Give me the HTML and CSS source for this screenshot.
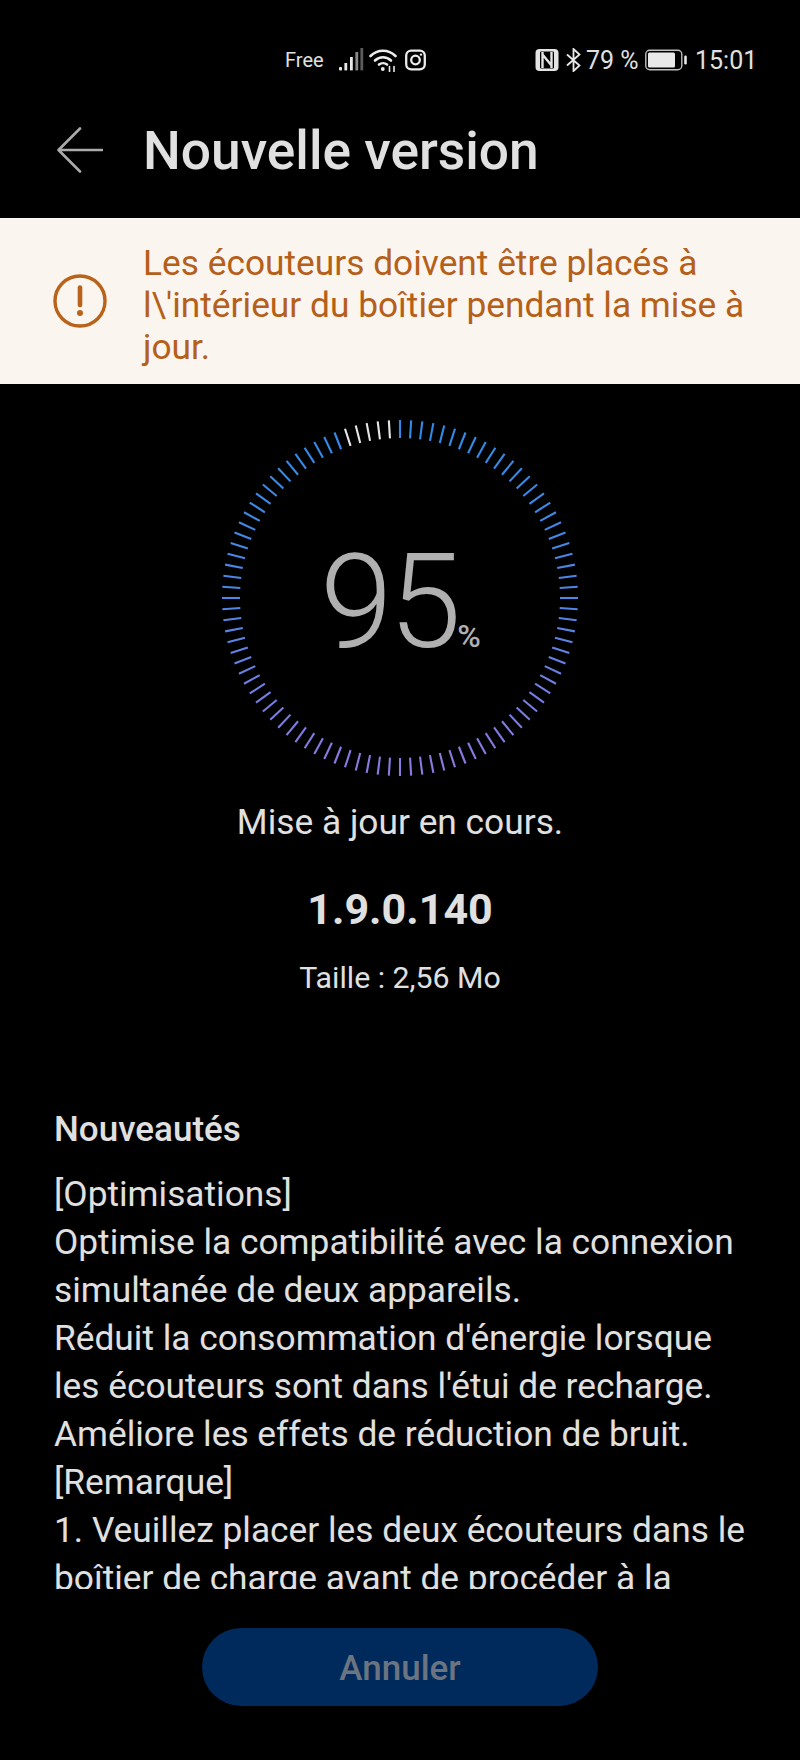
FILE: index.html
```html
<!DOCTYPE html>
<html lang="fr">
<head>
  <meta charset="UTF-8">
  <meta name="viewport" content="width=device-width, initial-scale=1.0">
  <title>Nouvelle version</title>
  <link rel="stylesheet" href="styles.css">
</head>
<body>
  <div class="page">
    <div class="status-bar">
      <span class="carrier">Free</span>
      <svg class="signal" width="26" height="24" viewBox="0 0 26 24">
        <rect x="1" y="19" width="3" height="3.4" rx="1" fill="#e8e8e8"/>
        <rect x="6.4" y="15" width="2.8" height="7.4" fill="#e8e8e8"/>
        <rect x="12" y="9" width="2.8" height="13.4" fill="#e8e8e8"/>
        <rect x="17.4" y="4" width="2.8" height="18.4" fill="#8a8a8a"/>
        <rect x="22.4" y="0" width="2.8" height="22.4" fill="#5c5c5c"/>
      </svg>
      <svg class="wifi" width="28" height="24" viewBox="0 0 28 24" fill="none" stroke="#ececec" stroke-width="2.6" stroke-linecap="round">
        <path d="M1.5 8C8.5 1 19.5 1 26.5 8"/>
        <path d="M6 12.5C10.5 8.2 17.5 8.2 22 12.5"/>
        <path d="M10 16.5C12.2 14.8 15.8 14.8 18 16.5"/>
        <circle cx="13.8" cy="21" r="1.9" fill="#ececec" stroke="none"/>
        <path d="M20.5 18.5v5M25 18.5v5" stroke-width="1.6"/>
      </svg>
      <svg class="insta" width="21" height="22" viewBox="0 0 21 22" fill="none" stroke="#ececec" stroke-width="2.3">
        <rect x="1.2" y="1.7" width="18.6" height="18.6" rx="5"/>
        <circle cx="10.5" cy="11" r="4.3"/>
        <circle cx="16" cy="5.6" r="1.2" fill="#ececec" stroke="none"/>
      </svg>
      <svg class="nfc" width="24" height="24" viewBox="0 0 24 24">
        <rect x="0.5" y="1" width="23" height="22" rx="4" fill="#e4e4e4"/>
        <rect x="5" y="3.5" width="14" height="17" rx="1" fill="#000"/>
        <path d="M7.5 4v16M7.5 6.5L16.5 17.5M16.5 4v16" fill="none" stroke="#e4e4e4" stroke-width="2.4"/>
      </svg>
      <svg class="bt" width="15" height="24" viewBox="0 0 15 24" fill="none" stroke="#e8e8e8" stroke-width="1.8">
        <path d="M1 6.5L13.5 17.5L7.5 23V1L13.5 6.5L1 17.5"/>
      </svg>
      <span class="battery-pct">79 %</span>
      <svg class="battery" width="42" height="22" viewBox="0 0 42 22">
        <rect x="0.8" y="1.2" width="36" height="19.6" rx="4" fill="none" stroke="#bdbdbd" stroke-width="1.4"/>
        <rect x="3" y="3.4" width="27" height="15.2" rx="1.5" fill="#e8e8e8"/>
        <rect x="39.2" y="6.5" width="2.6" height="9" rx="1.2" fill="#e8e8e8"/>
      </svg>
      <span class="clock">15:01</span>
    </div>

    <div class="header">
      <svg class="back" width="46" height="46" viewBox="0 0 46 46" fill="none" stroke="#ababab" stroke-width="2.6" stroke-linecap="round" stroke-linejoin="round">
        <path d="M45 23H2M23 1.5L1.5 23L23 44.5"/>
      </svg>
      <h1>Nouvelle version</h1>
    </div>

    <div class="notice">
      <svg class="notice-icon" width="54" height="54" viewBox="0 0 54 54">
        <circle cx="27" cy="27" r="25" fill="none" stroke="#b9621a" stroke-width="3.4"/>
        <path d="M27 13.5V31" fill="none" stroke="#b9621a" stroke-width="4.6" stroke-linecap="round"/>
        <circle cx="27" cy="39" r="3" fill="#b9621a"/>
      </svg>
      <p>Les écouteurs doivent être placés à l\'intérieur du boîtier pendant la mise à jour.</p>
    </div>

    <div class="gauge">
      <svg id="ticks" width="400" height="400" viewBox="-200 -200 400 400">
        <defs>
          <linearGradient id="tick-color" gradientUnits="userSpaceOnUse" x1="0" y1="-180" x2="0" y2="180">
            <stop offset="0" stop-color="#2f8be6"/>
            <stop offset="0.5" stop-color="#4f86e6"/>
            <stop offset="1" stop-color="#9078e0"/>
          </linearGradient>
        </defs>
      </svg>
      <div class="gauge-value">95<span class="gauge-unit">%</span></div>
    </div>

    <div class="state">Mise à jour en cours.</div>
    <div class="version">1.9.0.140</div>
    <div class="size">Taille : 2,56 Mo</div>

    <div class="notes">
      <h2>Nouveautés</h2>
      <p>[Optimisations]<br>
      Optimise la compatibilité avec la connexion simultanée de deux appareils.<br>
      Réduit la consommation d'énergie lorsque les écouteurs sont dans l'étui de recharge.<br>
      Améliore les effets de réduction de bruit.<br>
      [Remarque]<br>
      1. Veuillez placer les deux écouteurs dans le boîtier de charge avant de procéder à la mise à jour.</p>
    </div>

    <div class="actions">
      <button class="cancel">Annuler</button>
    </div>
  </div>

  <script src="script.js"></script>
</body>
</html>
```

FILE: styles.css
```css
:root {
  --color-background: #000000;
  --color-text: #e0e0e0;
  --color-warning: #b5601a;
  --color-notice: #fbf5ef;
  --color-button: #002a5c;
}

* {
  box-sizing: border-box;
}

body {
  background-color: var(--color-background);
  color: var(--color-text);
  font-family: Roboto, "Liberation Sans", sans-serif;
  margin: 0;
}

.page {
  display: flex;
  flex-direction: column;
  width: 800px;
  height: 1760px;
  overflow: hidden;
}

.status-bar {
  display: flex;
  align-items: center;
  height: 96px;
  padding: 24px 0 0 285px;
  flex-shrink: 0;
}

.carrier {
  font-size: 20px;
  width: 53px;
}

.signal {
  margin-right: 5px;
}

.wifi {
  margin-right: 8px;
}

.insta {
  margin-right: 109px;
}

.nfc {
  margin-right: 7px;
}

.bt {
  margin-right: 5px;
}

.battery-pct {
  font-size: 25px;
  width: 59px;
}

.battery {
  margin-right: 8px;
}

.clock {
  font-size: 25px;
}

.header {
  display: flex;
  align-items: center;
  height: 122px;
  padding: 0 0 12px 57px;
  flex-shrink: 0;
}

.header h1 {
  margin: 0 0 0 40px;
  font-size: 53.3px;
  font-weight: 500;
}

.back {
  margin-bottom: 2px;
}

.notice {
  display: flex;
  align-items: center;
  height: 166px;
  padding: 0 40px 0 53px;
  background-color: var(--color-notice);
  flex-shrink: 0;
}

.notice-icon {
  flex-shrink: 0;
  margin-right: 36px;
}

.notice p {
  margin: 7px 0 0;
  font-size: 35.3px;
  line-height: 42px;
  color: var(--color-warning);
}

.gauge {
  position: relative;
  width: 400px;
  height: 400px;
  margin: 14px auto 0;
  flex-shrink: 0;
}

.tick {
  stroke: url(#tick-color);
  stroke-width: 2.1;
}

.tick-rest {
  stroke: #e6e6e6;
}

.gauge-value {
  position: absolute;
  left: 120px;
  top: 129px;
  font-size: 131px;
  line-height: 150px;
  font-weight: 300;
  letter-spacing: -4px;
  color: #b0b0b0;
}

.gauge-unit {
  font-size: 32px;
  font-weight: 500;
  letter-spacing: 0;
}

.state {
  text-align: center;
  font-size: 35.3px;
  line-height: 48px;
  flex-shrink: 0;
}

.version {
  margin-top: 38px;
  text-align: center;
  font-size: 43px;
  line-height: 50px;
  font-weight: 700;
  flex-shrink: 0;
}

.size {
  margin-top: 24px;
  text-align: center;
  font-size: 30.3px;
  line-height: 40px;
  flex-shrink: 0;
}

.notes {
  height: 479px;
  margin-top: 112px;
  padding: 0 50px 0 54px;
  overflow: hidden;
  flex-shrink: 0;
}

.notes h2 {
  margin: 0 0 20px;
  font-size: 35px;
  line-height: 40px;
  font-weight: 500;
}

.notes p {
  margin: 0;
  font-size: 35.3px;
  line-height: 48px;
}

.actions {
  display: flex;
  justify-content: center;
  padding-top: 39px;
}

.cancel {
  width: 396px;
  height: 78px;
  padding-top: 3px;
  border: none;
  border-radius: 39px;
  background-color: var(--color-button);
  color: #6b7480;
  font-family: inherit;
  font-size: 35px;
  font-weight: 500;
}
```

FILE: script.js
```js
// Draw the 100 ticks of the progress ring
const ring = document.getElementById('ticks');
const done = 95;

for (let i = 0; i < 100; i++) {
  const angle = i * 3.6 * Math.PI / 180;
  const line = document.createElementNS('http://www.w3.org/2000/svg', 'line');
  line.setAttribute('x1', (160 * Math.sin(angle)).toFixed(2));
  line.setAttribute('y1', (-160 * Math.cos(angle)).toFixed(2));
  line.setAttribute('x2', (178 * Math.sin(angle)).toFixed(2));
  line.setAttribute('y2', (-178 * Math.cos(angle)).toFixed(2));
  line.setAttribute('class', i < done ? 'tick' : 'tick tick-rest');
  ring.appendChild(line);
}
```
